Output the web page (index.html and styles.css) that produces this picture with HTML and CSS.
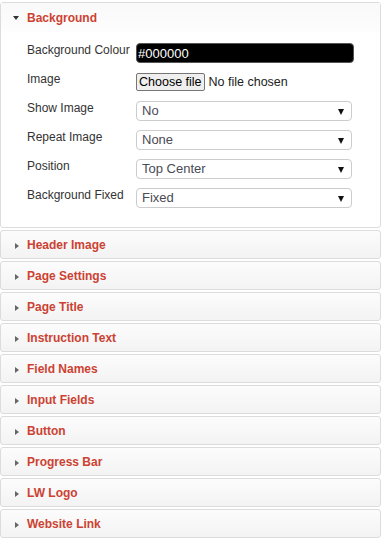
FILE: index.html
```html
<!DOCTYPE html>
<html>
<head>
<meta charset="utf-8">
<link rel="stylesheet" href="styles.css">
</head>
<body>
<div class="accordion">
  <section class="panel open">
    <div class="head"><span class="arrow-down"></span><span class="title">Background</span></div>
    <div class="body">
      <label class="lbl">Background Colour</label>
      <input class="color" type="text" value="#000000">
      <label class="lbl">Image</label>
      <div class="file-row"><button class="file-btn" type="button">Choose file</button><span class="file-name">No file chosen</span></div>
      <label class="lbl">Show Image</label>
      <div class="sel"><select><option>No</option></select></div>
      <label class="lbl">Repeat Image</label>
      <div class="sel"><select><option>None</option></select></div>
      <label class="lbl">Position</label>
      <div class="sel"><select><option>Top Center</option></select></div>
      <label class="lbl">Background Fixed</label>
      <div class="sel"><select><option>Fixed</option></select></div>
    </div>
  </section>
  <section class="panel"><div class="head"><span class="arrow-right"></span><span class="title">Header Image</span></div></section>
  <section class="panel"><div class="head"><span class="arrow-right"></span><span class="title">Page Settings</span></div></section>
  <section class="panel"><div class="head"><span class="arrow-right"></span><span class="title">Page Title</span></div></section>
  <section class="panel"><div class="head"><span class="arrow-right"></span><span class="title">Instruction Text</span></div></section>
  <section class="panel"><div class="head"><span class="arrow-right"></span><span class="title">Field Names</span></div></section>
  <section class="panel"><div class="head"><span class="arrow-right"></span><span class="title">Input Fields</span></div></section>
  <section class="panel"><div class="head"><span class="arrow-right"></span><span class="title">Button</span></div></section>
  <section class="panel"><div class="head"><span class="arrow-right"></span><span class="title">Progress Bar</span></div></section>
  <section class="panel"><div class="head"><span class="arrow-right"></span><span class="title">LW Logo</span></div></section>
  <section class="panel"><div class="head"><span class="arrow-right"></span><span class="title">Website Link</span></div></section>
</div>
</body>
</html>
```
FILE: styles.css
```css
html, body {
  margin: 0;
  padding: 0;
  background: #fff;
}
body {
  padding-top: 2px;
  font-family: "Liberation Sans", Arial, sans-serif;
}
.accordion {
  width: 381px;
  display: flex;
  flex-direction: column;
  gap: 2px;
}
.panel {
  border: 1px solid #dcdcdc;
  border-radius: 3px;
  background: linear-gradient(#fcfcfc, #f3f3f3);
}
.panel.open {
  background: #fff;
}
.panel.open .head {
  background: linear-gradient(#f9f9f9, #fdfdfd);
  height: 29px;
}
.head {
  height: 27px;
  display: flex;
  align-items: center;
  padding-left: 12px;
  box-sizing: border-box;
}
.title {
  font-weight: bold;
  font-size: 12px;
  color: #cc4232;
  margin-left: 8px;
}
.arrow-down {
  width: 0;
  height: 0;
  border-left: 3.5px solid transparent;
  border-right: 3.5px solid transparent;
  border-top: 4px solid #333;
  margin-top: 1px;
}
.arrow-right {
  width: 0;
  height: 0;
  border-top: 3.5px solid transparent;
  border-bottom: 3.5px solid transparent;
  border-left: 4px solid #666;
  margin-left: 2px;
  margin-top: 3px;
}
.body {
  display: grid;
  grid-template-columns: 109px 218px;
  grid-auto-rows: 20px;
  row-gap: 9px;
  padding: 11px 0 19px 26px;
  align-items: start;
}
.lbl {
  font-size: 12px;
  color: #333;
  line-height: 14px;
  white-space: nowrap;
}
.color {
  box-sizing: border-box;
  width: 218px;
  height: 20px;
  margin: 0;
  background: #000;
  color: #fff;
  border: 1px solid #555;
  border-radius: 4px;
  font-family: "Liberation Sans", Arial, sans-serif;
  font-size: 13px;
  padding: 0 0 0 1px;
  outline: none;
}
.file-row {
  height: 20px;
  display: flex;
  align-items: center;
  gap: 4px;
}
.file-btn {
  font-family: "Liberation Sans", Arial, sans-serif;
  font-size: 12.5px;
  background: #efefef;
  border: 1px solid #767676;
  border-radius: 2px;
  padding: 0 2px;
  height: 18px;
  margin: 0;
  color: #000;
}
.file-name {
  font-size: 12.5px;
  color: #222;
}
.sel {
  position: relative;
  width: 216px;
  height: 20px;
}
.sel select {
  appearance: none;
  -webkit-appearance: none;
  box-sizing: border-box;
  width: 216px;
  height: 20px;
  margin: 0;
  border: 1px solid #ccc;
  border-radius: 4px;
  background: #fff;
  font-family: "Liberation Sans", Arial, sans-serif;
  font-size: 13px;
  color: #4a4a55;
  padding: 0 0 1px 5px;
  outline: none;
}
.sel::after {
  content: "";
  position: absolute;
  right: 8px;
  top: 8px;
  width: 0;
  height: 0;
  border-left: 3px solid transparent;
  border-right: 3px solid transparent;
  border-top: 6px solid #111;
  pointer-events: none;
}
```
